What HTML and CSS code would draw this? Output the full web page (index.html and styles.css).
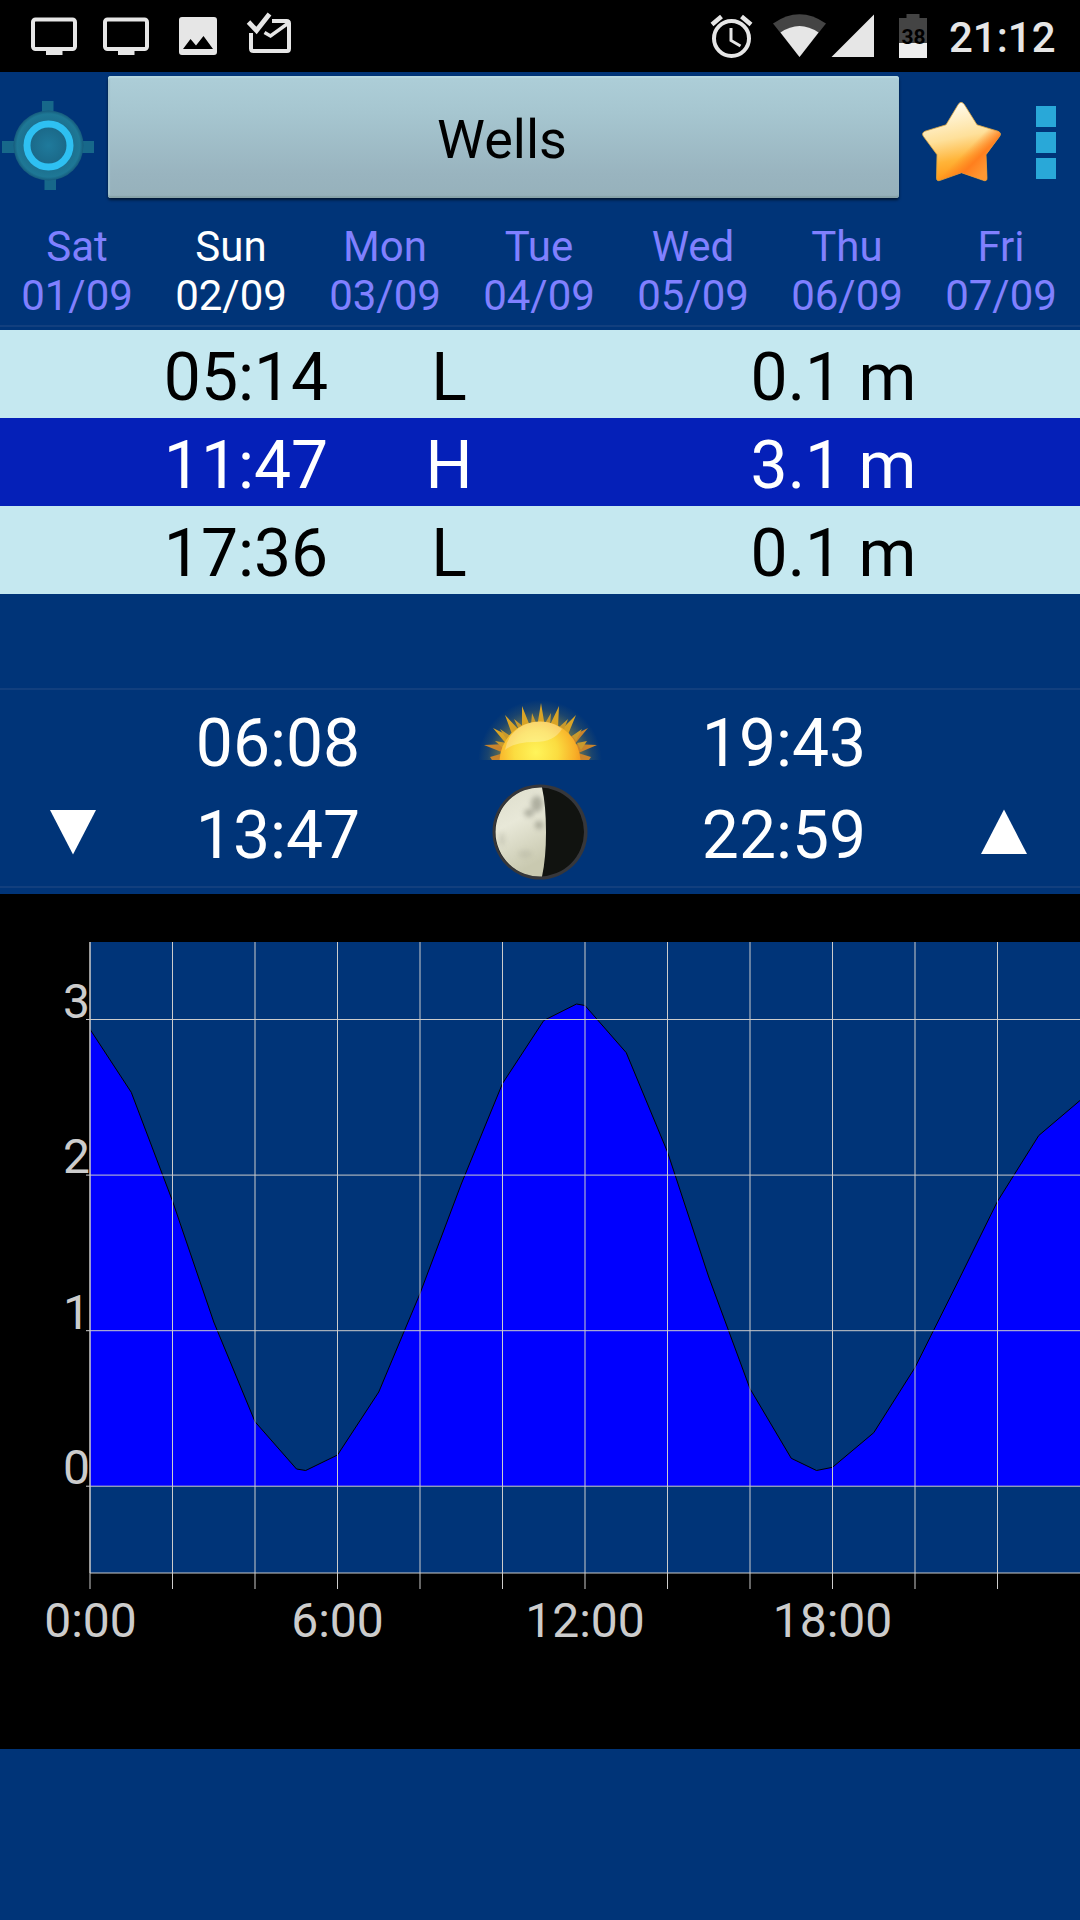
FILE: index.html
```html
<!DOCTYPE html>
<html lang="en">

<head>
    <meta charset="UTF-8">
    <meta name="viewport" content="width=device-width, initial-scale=1.0">
    <title>Wells - Tides</title>
    <link rel="stylesheet" href="styles.css">
</head>

<body>
    <header class="status-bar">
        <svg class="status-left" width="300" height="72" viewBox="0 0 300 72">
            <g fill="none" stroke="#e6e6e6" stroke-width="4">
                <rect x="33" y="19.500" width="42" height="29.500" rx="2.500"/>
                <rect x="105" y="19.500" width="42" height="29.500" rx="2.500"/>
            </g>
            <path fill="#e6e6e6" d="M46 49h16.500v6H46zM118 49h16.500v6H118z"/>
            <path fill="#e6e6e6" fill-rule="evenodd" d="M182 17h32a3 3 0 0 1 3 3v32a3 3 0 0 1-3 3h-32a3 3 0 0 1-3-3V20a3 3 0 0 1 3-3zM183 49h30L203.500 36l-7.500 9.500-5.500-6.500z"/>
            <path fill="none" stroke="#e6e6e6" stroke-width="4.800" d="M248.500 22l8 8.500 13-16.500"/>
            <path fill="none" stroke="#e6e6e6" stroke-width="4" d="M251 33v15.500q0 2.500 2.500 2.500H287q2 0 2-2.500V23.500q0-2.500-2.500-2.500H272"/>
            <path fill="none" stroke="#e6e6e6" stroke-width="3.500" d="M264.500 32.500l6 3.500 18-13"/>
        </svg>
        <div class="status-right">
            <svg width="230" height="72" viewBox="700 0 230 72">
                <g fill="none" stroke="#e6e6e6">
                    <circle cx="731.500" cy="38.500" r="17.500" stroke-width="4"/>
                    <path stroke-width="3" d="M731 28v12.500l9.500 5.500"/>
                    <path stroke-width="4.500" d="M712 24.500l9.500-8M751 24.500l-9.500-8"/>
                </g>
                <path fill="#444" d="M773 23.500q26.500-18.500 53 0L799.500 57z"/>
                <path fill="#e6e6e6" d="M780.500 32.500q19-13 38 0L799.500 57z"/>
                <path fill="#e6e6e6" d="M831.500 57L874 14.500V57z"/>
                <path fill="#444" d="M906.500 14h13v4h7.500v25h-28V18h7.500z"/>
                <path fill="#eee" d="M899 43h28v15h-28z"/>
                <text class="battery-level" x="913.500" y="44">38</text>
            </svg>
            <span class="clock">21:12</span>
        </div>
    </header>

    <div class="toolbar">
        <svg class="locate" width="104" height="110" viewBox="0 0 104 110">
            <defs>
                <radialGradient id="dial">
                    <stop offset="0" stop-color="#1f7a9c"/>
                    <stop offset="0.500" stop-color="#1b6a8a"/>
                    <stop offset="0.900" stop-color="#1e7896"/>
                    <stop offset="1" stop-color="#165b7c"/>
                </radialGradient>
            </defs>
            <path fill="#17688a" d="M42 29h11.500v14H42zM44.500 104H56v14H44.500zM2 69h14v12H2zM80 69h14v12H80z"/>
            <circle cx="48.500" cy="73.500" r="35" fill="url(#dial)"/>
            <circle cx="48.500" cy="73.500" r="21.500" fill="none" stroke="#2ec0f2" stroke-width="7"/>
        </svg>
        <button class="place">Wells</button>
        <svg class="star" width="90" height="88" viewBox="0 0 90 90" preserveAspectRatio="none">
            <defs>
                <linearGradient id="gold" x1="0.350" y1="0" x2="0.550" y2="1">
                    <stop offset="0" stop-color="#fffdf2"/>
                    <stop offset="0.450" stop-color="#fee09a"/>
                    <stop offset="0.720" stop-color="#ffb438"/>
                    <stop offset="1" stop-color="#ff9010"/>
                </linearGradient>
                <linearGradient id="shade" x1="0.300" y1="0.300" x2="0.850" y2="0.850">
                    <stop offset="0.520" stop-color="#ff7a1c" stop-opacity="0"/>
                    <stop offset="0.750" stop-color="#ff7a1c" stop-opacity="0.900"/>
                    <stop offset="1" stop-color="#ff9a3a" stop-opacity="0.800"/>
                </linearGradient>
            </defs>
            <path fill="url(#gold)" stroke="#d9a441" stroke-width="0.800" d="M42 9q3-5 6.500 0l12.500 20.500 21 6.500q4 2 1.500 5.500L70 60l1 24q0 4-4.500 2L45.500 78.500 25 86q-4.500 2-4.500-2L21 60 7.500 41.500Q5 38 9 36l21-6.500z"/>
            <path fill="url(#shade)" d="M42 9q3-5 6.500 0l12.500 20.500 21 6.500q4 2 1.500 5.500L70 60l1 24q0 4-4.500 2L45.500 78.500 25 86q-4.500 2-4.500-2L21 60 7.500 41.500Q5 38 9 36l21-6.500z"/>
        </svg>
        <div class="menu">
            <i></i><i></i><i></i>
        </div>
    </div>

    <nav class="days">
        <div class="day">Sat<br>01/09</div>
        <div class="day active">Sun<br>02/09</div>
        <div class="day">Mon<br>03/09</div>
        <div class="day">Tue<br>04/09</div>
        <div class="day">Wed<br>05/09</div>
        <div class="day">Thu<br>06/09</div>
        <div class="day">Fri<br>07/09</div>
    </nav>

    <section class="tides">
        <div class="tide"><span>05:14</span><span>L</span><span class="height">0.1 m</span></div>
        <div class="tide high"><span>11:47</span><span>H</span><span class="height">3.1 m</span></div>
        <div class="tide"><span>17:36</span><span>L</span><span class="height">0.1 m</span></div>
    </section>

    <section class="sky">
        <div class="sky-row sun-row">
            <span></span>
            <span>06:08</span>
            <svg class="sun" width="126" height="60" viewBox="477 700 126 60">
                <defs>
                    <radialGradient id="sun-body" cx="0.450" cy="0.380" r="0.600">
                        <stop offset="0" stop-color="#fff45a"/>
                        <stop offset="0.450" stop-color="#fbdc40"/>
                        <stop offset="0.800" stop-color="#f8b028"/>
                        <stop offset="1" stop-color="#f0901c"/>
                    </radialGradient>
                    <radialGradient id="glow">
                        <stop offset="0.600" stop-color="#a89a38" stop-opacity="0.650"/>
                        <stop offset="0.850" stop-color="#a89a38" stop-opacity="0.150"/>
                        <stop offset="1" stop-color="#a89a38" stop-opacity="0"/>
                    </radialGradient>
                </defs>
                <circle cx="540" cy="762" r="62" fill="url(#glow)"/>
                <path fill="#d9a426" d="M541 703l4 24h-8zM522 706l8 20-8 3zM559 706l-1 22-8-3zM505 715l15 16-7 6zM576 715l-9 22-7-6zM493 728l20 10-5 8z"/>
                <path fill="#c9842c" d="M588 728l-15 18-5-8zM484 745l23-1-3 9zM597 745l-21 9-3-10zM490 757l14-4v7h-12zM591 757l-13-4v7h11z"/>
                <path fill="#c99a2c" d="M532 713l5 12h-6zM551 713l-1 12h-6zM514 719l11 9-5 4zM568 719l-5 13-5-4zM500 729l12 8-4 5zM582 729l-6 12-4-5zM495 741l12 2-3 6zM587 741l-6 9-4-7z"/>
                <circle cx="540" cy="762" r="40.500" fill="url(#sun-body)"/>
                <path fill="#fff" opacity="0.280" d="M505 750a35 33 0 0 1 57-21q-8 13-27 13-21 0-30 8z"/>
            </svg>
            <span>19:43</span>
            <span></span>
        </div>
        <div class="sky-row moon-row">
            <svg class="arrow" width="46" height="46" viewBox="0 0 46 46"><path fill="#fff" d="M0 1h46L23 45.500z"/></svg>
            <span>13:47</span>
            <svg class="moon" width="96" height="96" viewBox="0 0 96 96">
                <defs>
                    <linearGradient id="moon-light" x1="0" y1="0" x2="0.300" y2="1">
                        <stop offset="0" stop-color="#dcdccb"/>
                        <stop offset="0.450" stop-color="#e8e8d8"/>
                        <stop offset="1" stop-color="#c9c9b0"/>
                    </linearGradient>
                    <filter id="soft"><feGaussianBlur stdDeviation="2.500"/></filter>
                </defs>
                <circle cx="48" cy="48" r="47.500" fill="#36373b"/>
                <circle cx="47.500" cy="48" r="44.500" fill="#111310"/>
                <path fill="url(#moon-light)" d="M50 3.500a44.500 44.500 0 0 0 -46.500 44.500a44.500 44.500 0 0 0 46.500 44.500q4-18 4-44.500T50 3.500z"/>
                <g fill="#77786a" opacity="0.500" filter="url(#soft)">
                    <ellipse cx="45" cy="20" rx="6" ry="8"/>
                    <ellipse cx="37" cy="29" rx="5" ry="4"/>
                    <ellipse cx="47" cy="41" rx="4" ry="4"/>
                    <ellipse cx="10" cy="55" rx="3" ry="7" opacity="0.400"/>
                    <ellipse cx="33" cy="70" rx="7" ry="4" opacity="0.300"/>
                </g>
            </svg>
            <span>22:59</span>
            <svg class="arrow arrow-up" width="46" height="46" viewBox="0 0 46 46"><path fill="#fff" d="M0 45h46L23 0.500z"/></svg>
        </div>
    </section>

    <!-- 41.25px per hour, 155.6px per metre -->
    <svg class="chart" width="1080" height="855" viewBox="0 894 1080 855">
        <rect x="90" y="942" width="990" height="631" fill="#003478"/>
        <path fill="#00f" d="M90 1486V1029.300L131.250 1092.300 172.500 1201 213.750 1322 255 1421.700 296.500 1469 305.700 1470.500 337.500 1455 378.750 1392 420 1293.500 461.250 1184 502.500 1083.500 543.750 1020.500 576.500 1004 585 1005.500 626.250 1052.700 667.500 1152 708.750 1277 750 1388.700 791.250 1458.300 816.500 1470.500 832.500 1467.300 873.750 1432.700 915 1367.500 956.250 1285 997.500 1201.300 1038.750 1135.500 1080 1100.500V1486z"/>
        <polyline fill="none" stroke="#000" points="90,1029.300 131.250,1092.300 172.500,1201 213.750,1322 255,1421.700 296.500,1469 305.700,1470.500 337.500,1455 378.750,1392 420,1293.500 461.250,1184 502.500,1083.500 543.750,1020.500 576.500,1004 585,1005.500 626.250,1052.700 667.500,1152 708.750,1277 750,1388.700 791.250,1458.300 816.500,1470.500 832.500,1467.300 873.750,1432.700 915,1367.500 956.250,1285 997.500,1201.300 1038.750,1135.500 1080,1100.500"/>
        <path class="grid" d="M90 942v647M172.500 942v647M255 942v647M337.500 942v647M420 942v647M502.500 942v647M585 942v647M667.500 942v647M750 942v647M832.500 942v647M915 942v647M997.500 942v647"/>
        <path class="grid" d="M86 1019.500h994M86 1175.100h994M86 1330.700h994M86 1486.200h994M90 1573h990"/>
        <path class="grid" d="M90 942v631"/>
        <g class="axis-y">
            <text x="90" y="1017.500">3</text>
            <text x="90" y="1173">2</text>
            <text x="90" y="1329">1</text>
            <text x="90" y="1484">0</text>
        </g>
        <g class="axis-x">
            <text x="90.500" y="1637">0:00</text>
            <text x="337.500" y="1637">6:00</text>
            <text x="585" y="1637">12:00</text>
            <text x="832.500" y="1637">18:00</text>
        </g>
    </svg>
</body>

</html>
```
FILE: styles.css
```css
body {
    margin: 0;
    width: 1080px;
    height: 1920px;
    overflow: hidden;
    background-color: #003478;
    font-family: Roboto, sans-serif;
    color: #fff;
}

svg {
    display: block;
}

.status-bar {
    display: flex;
    justify-content: space-between;
    height: 72px;
    background-color: #000;
}

.status-right {
    display: flex;
    width: 380px;
}

.clock {
    padding-left: 19px;
    font-size: 42px;
    font-weight: 500;
    line-height: 75px;
    color: #e6e6e6;
}

.battery-level {
    font-size: 21px;
    font-weight: 700;
    text-anchor: middle;
    fill: #000;
}

.toolbar {
    display: flex;
    height: 148px;
}

.locate {
    overflow: visible;
}

.place {
    width: 791px;
    height: 122px;
    margin: 4px 0 0 4px;
    padding: 4px 3px 0 0;
    border: none;
    border-radius: 3px;
    background: linear-gradient(#adced8 0%, #a6c6d0 30%, #99b4bf 80%, #96b1bb 100%);
    box-shadow: inset 0 2px 1px #b5d8e1, inset 0 -2px 1px #88a3a8, inset 2px 0 1px #a2c3cd, 0 2px 3px rgba(0, 0, 0, 0.6);
    font-family: inherit;
    font-size: 54px;
    color: #000;
}

.star {
    margin: 24px 0 0 17px;
}

.menu {
    display: flex;
    flex-direction: column;
    gap: 5px;
    padding: 34px 0 0 30px;
}

.menu i {
    width: 20px;
    height: 21px;
    background-color: #29a8d8;
}

.days {
    display: grid;
    grid-template-columns: repeat(7, 154px);
    height: 105px;
    border-bottom: 2px solid #123f7e;
    margin-bottom: 3px;
}

.day {
    padding-top: 2px;
    text-align: center;
    font-size: 42px;
    line-height: 49px;
    color: #8080ff;
}

.day.active {
    color: #fff;
}

.tide {
    display: grid;
    grid-template-columns: 294px 112px 575px;
    height: 81px;
    padding: 7px 0 0 99px;
    background-color: #c5e8f0;
    color: #000;
    font-size: 66px;
    line-height: 82px;
    text-align: center;
}

.tide.high {
    background-color: #0520b8;
    color: #fff;
}

.height {
    padding-left: 82px;
}

.sky {
    height: 196px;
    margin: 94px 0 6px;
    border-top: 2px solid #123f7e;
    border-bottom: 2px solid #123f7e;
}

.sky-row {
    display: grid;
    grid-template-columns: 145px 266px 258px 230px 181px;
    align-items: center;
    justify-items: center;
    font-size: 66px;
    line-height: 92px;
}

.sun-row {
    height: 90px;
    padding-top: 8px;
}

.moon-row {
    grid-template-rows: 95px;
}

.sun {
    align-self: start;
    margin-top: 2px;
}

.moon {
    margin-bottom: 7px;
}

.arrow {
    margin-bottom: 8px;
}

.arrow-up {
    margin-left: 29px;
}

.chart {
    background-color: #000;
}

.grid {
    fill: none;
    stroke: #ccc;
    stroke-width: 1;
}

.axis-x text,
.axis-y text {
    font-size: 48px;
    fill: #ccc;
}

.axis-x text {
    text-anchor: middle;
}

.axis-y text {
    text-anchor: end;
}
```
